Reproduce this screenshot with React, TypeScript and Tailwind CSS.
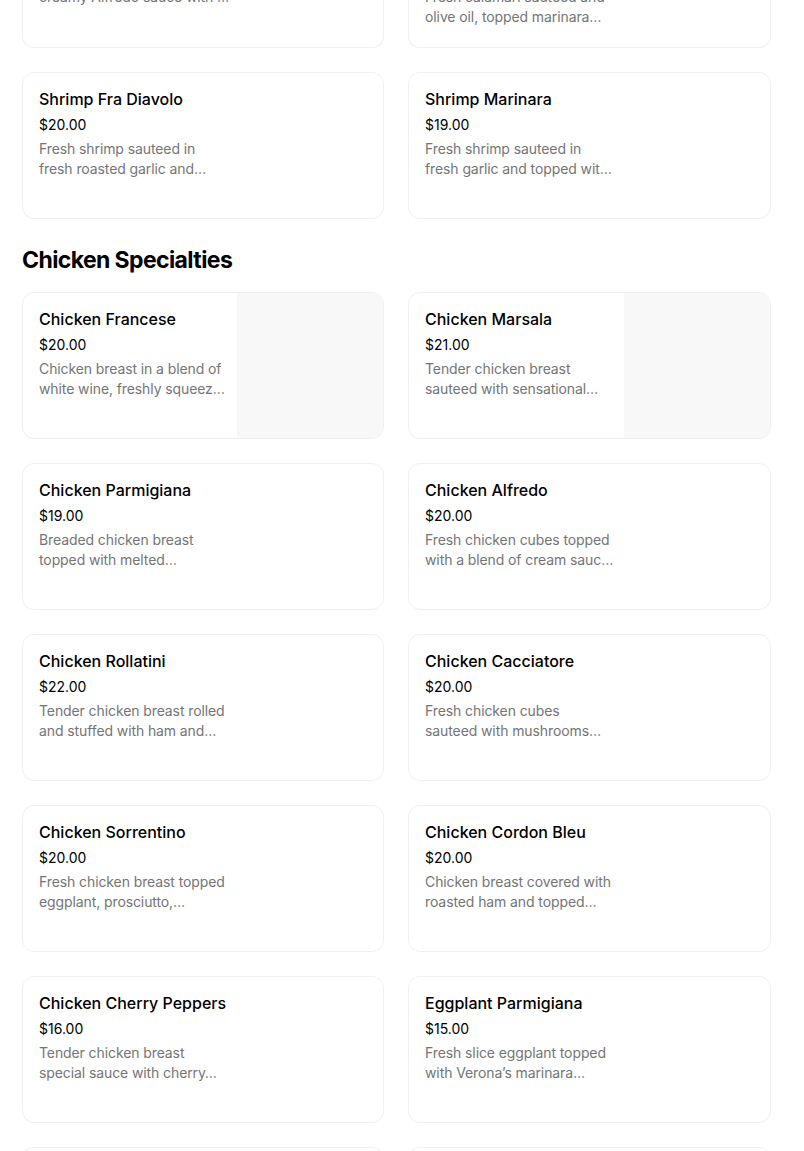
import React from "react";

type Item = { name: string; price: string; lines: [string, string]; image?: boolean };

const shrimp: Item[] = [
  { name: "Shrimp Fra Diavolo", price: "$20.00", lines: ["Fresh shrimp sauteed in", "fresh roasted garlic and…"] },
  { name: "Shrimp Marinara", price: "$19.00", lines: ["Fresh shrimp sauteed in", "fresh garlic and topped wit…"] },
];

const chicken: Item[] = [
  { name: "Chicken Francese", price: "$20.00", lines: ["Chicken breast in a blend of", "white wine, freshly squeez…"], image: true },
  { name: "Chicken Marsala", price: "$21.00", lines: ["Tender chicken breast", "sauteed with sensational…"], image: true },
  { name: "Chicken Parmigiana", price: "$19.00", lines: ["Breaded chicken breast", "topped with melted…"] },
  { name: "Chicken Alfredo", price: "$20.00", lines: ["Fresh chicken cubes topped", "with a blend of cream sauc…"] },
  { name: "Chicken Rollatini", price: "$22.00", lines: ["Tender chicken breast rolled", "and stuffed with ham and…"] },
  { name: "Chicken Cacciatore", price: "$20.00", lines: ["Fresh chicken cubes", "sauteed with mushrooms…"] },
  { name: "Chicken Sorrentino", price: "$20.00", lines: ["Fresh chicken breast topped", "eggplant, prosciutto,…"] },
  { name: "Chicken Cordon Bleu", price: "$20.00", lines: ["Chicken breast covered with", "roasted ham and topped…"] },
  { name: "Chicken Cherry Peppers", price: "$16.00", lines: ["Tender chicken breast", "special sauce with cherry…"] },
  { name: "Eggplant Parmigiana", price: "$15.00", lines: ["Fresh slice eggplant topped", "with Verona’s marinara…"] },
];

function Card({ item }: { item: Item }) {
  return (
    <div className="flex h-[147px] overflow-hidden rounded-[12px] border border-[#f0f0f0] bg-white">
      <div className="flex min-w-0 flex-1 flex-col px-4 pt-4">
        <div className="text-[16px] leading-[20px] font-medium text-black">{item.name}</div>
        <div className="mt-[6px] text-[14px] leading-[20px] text-black">{item.price}</div>
        <div className="mt-1 text-[14px] leading-[20px] tracking-[-0.1px] text-[#757575]">
          <div className="whitespace-nowrap">{item.lines[0]}</div>
          <div className="whitespace-nowrap">{item.lines[1]}</div>
        </div>
      </div>
      {item.image && <div className="w-[146px] shrink-0 rounded-r-[11px] bg-[#f8f8f8]" />}
    </div>
  );
}

export default function App() {
  return (
    <div className="min-h-[1151px] bg-white" style={{ fontFamily: "Inter, 'Noto Sans', sans-serif" }}>
      <div className="ml-[22px] w-[749px]">
        <div className="grid grid-cols-[362px_363px] gap-x-6 gap-y-6">
          <div className="h-[48px] overflow-hidden rounded-b-[12px] border border-t-0 border-[#f0f0f0] bg-white">
            <div className="-mt-[13px] px-4 text-[14px] leading-[20px] tracking-[-0.1px] text-[#757575]">
              <div className="whitespace-nowrap">creamy Alfredo sauce with …</div>
            </div>
          </div>
          <div className="h-[48px] overflow-hidden rounded-b-[12px] border border-t-0 border-[#f0f0f0] bg-white">
            <div className="-mt-[13px] px-4 text-[14px] leading-[20px] tracking-[-0.1px] text-[#757575]">
              <div className="whitespace-nowrap">Fresh calamari sauteed and</div>
              <div className="whitespace-nowrap">olive oil, topped marinara…</div>
            </div>
          </div>
          {shrimp.map((it) => (
            <Card key={it.name} item={it} />
          ))}
        </div>
        <h2 className="mt-[25px] mb-4 text-[23px] leading-[32px] font-bold tracking-[-0.6px] text-black">
          Chicken Specialties
        </h2>
        <div className="grid grid-cols-[362px_363px] gap-x-6 gap-y-6">
          {chicken.map((it) => (
            <Card key={it.name} item={it} />
          ))}
          <div className="h-[147px] rounded-[12px] border border-[#f0f0f0] bg-white" />
          <div className="h-[147px] rounded-[12px] border border-[#f0f0f0] bg-white" />
        </div>
      </div>
    </div>
  );
}
